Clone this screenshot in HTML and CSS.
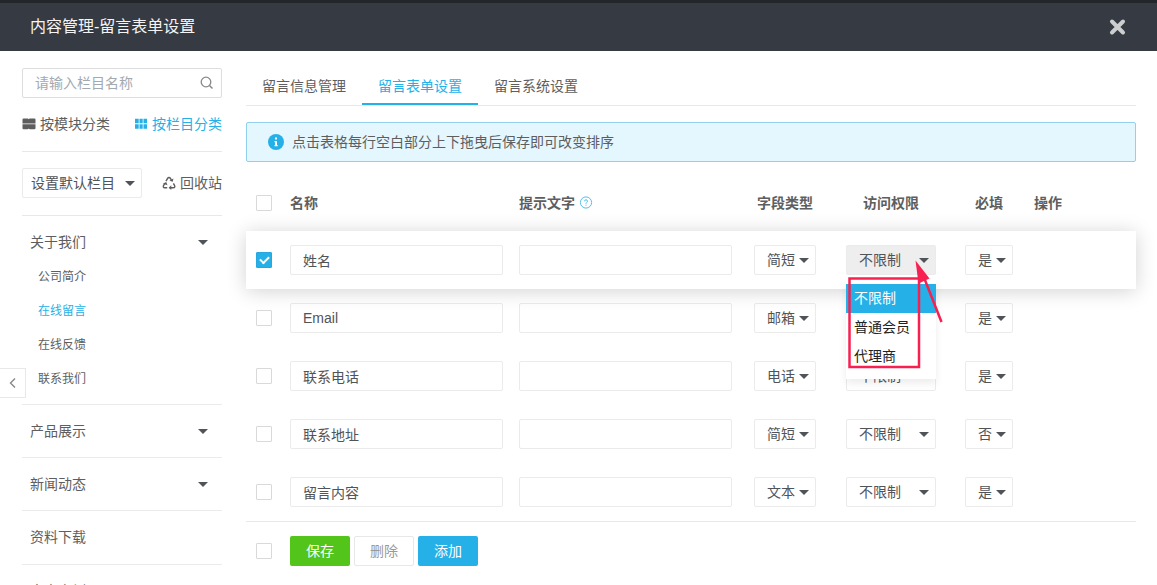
FILE: index.html
```
<!DOCTYPE html>
<html lang="zh-CN">
<head>
<meta charset="utf-8">
<title>内容管理-留言表单设置</title>
<link rel="stylesheet" href="styles.css">
</head>
<body>
<div class="app">
  <header class="topbar">
    <h1 class="topbar-title">内容管理-留言表单设置</h1>
    <button class="close" type="button" aria-label="关闭">
      <svg width="18" height="18" viewBox="0 0 18 18"><path d="M3 3.500l11 11M14 3.500l-11 11" stroke="currentColor" stroke-width="4" stroke-linecap="round" fill="none"/></svg>
    </button>
  </header>
  <div class="body">
    <aside class="sidebar">
      <div class="search">
        <input class="search-input" type="text" placeholder="请输入栏目名称" aria-label="请输入栏目名称">
        <svg class="search-icon" width="14" height="14" viewBox="0 0 14 14"><circle cx="6" cy="6" r="4.800" fill="none" stroke="currentColor" stroke-width="1.300"/><path d="M9.500 9.500l3 3" stroke="currentColor" stroke-width="1.500"/></svg>
      </div>
      <div class="side-row modes">
        <a class="side-link" href="#module"><svg width="14" height="12" viewBox="0 0 14 12"><path fill="currentColor" d="M1.500.5h4q1 0 1.200.8.300-.8 1.300-.8H12.500q1 0 1 1v4H.5v-4q0-1 1-1zM.5 6.300h13v4q0 1-1 1H8q-1 0-1.200-.8-.3.800-1.300.8h-4q-1 0-1-1z"/></svg>按模块分类</a>
        <a class="side-link is-active" href="#column"><svg width="14" height="12" viewBox="0 0 14 12"><path fill="currentColor" d="M1 .8h3.700v4.400H1zM5.500.8h3.200v4.400H5.500zM9.500.8H13v4.400H9.500zM1 6.200h3.700v4.600H1zM5.500 6.200h3.200v4.600H5.500zM9.500 6.200H13v4.600H9.500z"/></svg>按栏目分类</a>
      </div>
      <div class="side-row tools">
        <span class="select side-select"><select aria-label="默认栏目"><option>设置默认栏目</option></select></span>
        <a class="side-link" href="#recycle"><svg width="14" height="14" viewBox="0 0 14 14" fill="none" stroke="currentColor" stroke-width="1.400" stroke-linejoin="round"><path d="M4 5.200L5.600 2.300Q7 .6 8.400 2.300L9.500 4.300M2.900 7.200L1.500 9.600Q.8 11.600 2.700 11.800H5.200M7.500 11.800h3.800q2.100-.2 1.300-2.200L11.400 7.400"/><path fill="currentColor" stroke="none" d="M7.500 4.800l3.300 1 .6-3.400zM1 7.800l3.200-1.900 1.300 3.300zM9.300 9.300v4.700L6.700 11.700z"/></svg>回收站</a>
      </div>
      <nav>
        <section class="group">
          <a class="group-title" href="#about">关于我们<i class="caret"></i></a>
          <ul class="sub">
            <li><a href="#a1">公司简介</a></li>
            <li><a class="is-active" href="#a2">在线留言</a></li>
            <li><a href="#a3">在线反馈</a></li>
            <li><a href="#a4">联系我们</a></li>
          </ul>
        </section>
        <section class="group"><a class="group-title" href="#product">产品展示<i class="caret"></i></a></section>
        <section class="group"><a class="group-title" href="#news">新闻动态<i class="caret"></i></a></section>
        <section class="group"><a class="group-title" href="#files">资料下载</a></section>
        <section class="group"><a class="group-title" href="#cases">客户案例</a></section>
      </nav>
    </aside>
    <button class="collapse" type="button" aria-label="收起侧栏">
      <svg width="8" height="12" viewBox="0 0 8 12"><path d="M6 1.500L1.500 6l4.500 4.500" fill="none" stroke="currentColor" stroke-width="1.400"/></svg>
    </button>
    <main class="main">
      <nav class="tabs">
        <a class="tab" href="#t1">留言信息管理</a>
        <a class="tab is-active" href="#t2">留言表单设置</a>
        <a class="tab" href="#t3">留言系统设置</a>
      </nav>
      <p class="notice">
        <svg width="16" height="16" viewBox="0 0 16 16"><circle cx="8" cy="8" r="8" fill="#25b1e8"/><path d="M7 3.500h2v2H7zM6.500 7H9v4h.7v1.200H6.500V11h.6V8.200h-.6z" fill="#fff"/></svg>
        点击表格每行空白部分上下拖曳后保存即可改变排序
      </p>
      <table class="fields">
        <colgroup><col class="c-check"><col><col><col class="c-type"><col class="c-access"><col class="c-req"><col class="c-act"></colgroup>
        <thead>
          <tr>
            <th class="mid"><input type="checkbox" aria-label="全选"></th>
            <th>名称</th>
            <th><span class="hint">提示文字<svg width="13" height="14" viewBox="0 0 13 14" fill="none" stroke="#4fc0ee"><circle cx="6" cy="6.500" r="5.600"/><path d="M4.500 5.300Q4.600 3.800 6 3.800T7.500 5.200Q7.500 6 6.700 6.500T6 7.800M6 8.700v1"/></svg></span></th>
            <th class="mid">字段类型</th>
            <th class="mid">访问权限</th>
            <th class="mid">必填</th>
            <th>操作</th>
          </tr>
        </thead>
        <tbody>
          <tr class="picked">
            <td class="mid"><input type="checkbox" checked aria-label="选择 姓名"></td>
            <td><input class="text" type="text" value="姓名" aria-label="名称"></td>
            <td><input class="text" type="text" aria-label="提示文字"></td>
            <td class="mid"><span class="select w-type"><select aria-label="字段类型"><option>简短</option></select></span></td>
            <td class="mid"><span class="select w-access is-open"><select aria-label="访问权限"><option>不限制</option></select>
              <ul class="menu" role="listbox" aria-label="访问权限">
                <li class="is-active" role="option" aria-selected="true">不限制</li>
                <li role="option">普通会员</li>
                <li role="option">代理商</li>
              </ul>
              <svg class="marker" width="100" height="130" viewBox="0 0 100 130" fill="none" stroke="#f82050" stroke-width="2.500"><path d="M3.500 33.500h69.500v88.500H3.500zM77 30L95.500 77"/><path d="M69.500 15.500L83.500 33.500 72.500 38.500z" fill="#f82050" stroke="none"/></svg>
            </span></td>
            <td class="mid"><span class="select w-req"><select aria-label="必填"><option>是</option></select></span></td>
            <td></td>
          </tr>
          <tr>
            <td class="mid"><input type="checkbox" aria-label="选择 Email"></td>
            <td><input class="text" type="text" value="Email" aria-label="名称"></td>
            <td><input class="text" type="text" aria-label="提示文字"></td>
            <td class="mid"><span class="select w-type"><select aria-label="字段类型"><option>邮箱</option></select></span></td>
            <td class="mid"><span class="select w-access"><select aria-label="访问权限"><option>不限制</option></select></span></td>
            <td class="mid"><span class="select w-req"><select aria-label="必填"><option>是</option></select></span></td>
            <td></td>
          </tr>
          <tr>
            <td class="mid"><input type="checkbox" aria-label="选择 联系电话"></td>
            <td><input class="text" type="text" value="联系电话" aria-label="名称"></td>
            <td><input class="text" type="text" aria-label="提示文字"></td>
            <td class="mid"><span class="select w-type"><select aria-label="字段类型"><option>电话</option></select></span></td>
            <td class="mid"><span class="select w-access"><select aria-label="访问权限"><option>不限制</option></select></span></td>
            <td class="mid"><span class="select w-req"><select aria-label="必填"><option>是</option></select></span></td>
            <td></td>
          </tr>
          <tr>
            <td class="mid"><input type="checkbox" aria-label="选择 联系地址"></td>
            <td><input class="text" type="text" value="联系地址" aria-label="名称"></td>
            <td><input class="text" type="text" aria-label="提示文字"></td>
            <td class="mid"><span class="select w-type"><select aria-label="字段类型"><option>简短</option></select></span></td>
            <td class="mid"><span class="select w-access"><select aria-label="访问权限"><option>不限制</option></select></span></td>
            <td class="mid"><span class="select w-req"><select aria-label="必填"><option>否</option></select></span></td>
            <td></td>
          </tr>
          <tr>
            <td class="mid"><input type="checkbox" aria-label="选择 留言内容"></td>
            <td><input class="text" type="text" value="留言内容" aria-label="名称"></td>
            <td><input class="text" type="text" aria-label="提示文字"></td>
            <td class="mid"><span class="select w-type"><select aria-label="字段类型"><option>文本</option></select></span></td>
            <td class="mid"><span class="select w-access"><select aria-label="访问权限"><option>不限制</option></select></span></td>
            <td class="mid"><span class="select w-req"><select aria-label="必填"><option>是</option></select></span></td>
            <td></td>
          </tr>
        </tbody>
        <tfoot>
          <tr>
            <td class="mid"><input type="checkbox" aria-label="全选"></td>
            <td colspan="6"><div class="actions">
              <button class="btn btn-save" type="button">保存</button>
              <button class="btn btn-delete" type="button">删除</button>
              <button class="btn btn-add" type="button">添加</button>
            </div></td>
          </tr>
        </tfoot>
      </table>
    </main>
  </div>
</div>
</body>
</html>
```
FILE: styles.css
```
* { box-sizing: border-box; }
body {
  margin: 0;
  background: #fff;
  color: #5e5e5e;
  font: 14px/20px "Liberation Sans", "Noto Sans CJK SC", sans-serif;
}
a { color: inherit; text-decoration: none; }
ul { margin: 0; padding: 0; list-style: none; }
input, select, button { font: inherit; color: inherit; }
svg { display: block; flex: none; }

.app { display: flex; flex-direction: column; height: 100vh; overflow: hidden; }

.topbar {
  flex: none;
  display: flex;
  align-items: center;
  justify-content: space-between;
  height: 51px;
  padding: 0 30px;
  border-top: 3px solid #23272c;
  background: #363a42;
  color: #f4f4f4;
}
.topbar-title { margin: 0; font-size: 16px; line-height: 24px; font-weight: 400; }
.close { padding: 0; border: 0; background: none; color: #ccced0; }

.body { position: relative; flex: 1; min-height: 0; display: flex; gap: 24px; padding: 17px 21px 0 22px; }

.sidebar { flex: none; width: 200px; }
.search { position: relative; }
.search-input {
  display: block;
  width: 100%;
  height: 30px;
  padding: 0 32px 0 12px;
  border: 1px solid #ddd;
  border-radius: 2px;
  background: #fff;
}
.search-input::placeholder { color: #a3a9b0; opacity: 1; }
.search-icon { position: absolute; right: 8px; top: 8px; color: #888; }
.side-row { display: flex; align-items: center; justify-content: space-between; border-bottom: 1px solid #e8e8e8; }
.modes { height: 54px; padding-bottom: 2px; }
.tools { height: 64px; padding-bottom: 2px; }
.side-link { display: flex; align-items: center; gap: 4px; }
.is-active { color: #25b1e8; }

.select { position: relative; display: inline-block; text-align: left; vertical-align: middle; }
.select select {
  display: block;
  width: 100%;
  height: 30px;
  padding: 0 12px;
  border: 1px solid #ebebeb;
  border-radius: 2px;
  background: #fff;
  color: #505458;
  appearance: none;
}
.select::after, .caret {
  width: 0;
  height: 0;
  border: 5px solid transparent;
  border-top-color: #505458;
  border-bottom: 0;
}
.select::after { content: ""; position: absolute; right: 7px; top: 13px; pointer-events: none; }
.side-select { width: 120px; }
.side-select select { padding: 0 8px; }
.w-type { width: 62px; }
.w-access { width: 90px; }
.w-req { width: 48px; }
.is-open select { background: #eee; }

.group { border-bottom: 1px solid #ebebeb; }
.group-title { display: flex; align-items: center; justify-content: space-between; height: 52px; padding: 0 14px 0 8px; }
.group:nth-child(4) { padding-bottom: 1px; }
.sub { margin-top: -8px; padding: 0 0 8px 16px; font-size: 12px; line-height: 34px; }
.sub a { display: block; }

.collapse {
  position: absolute;
  left: 0;
  top: 317px;
  display: flex;
  align-items: center;
  justify-content: center;
  width: 26px;
  height: 30px;
  padding: 0;
  border: 1px solid #e8e8e8;
  border-left: 0;
  background: #fff;
  color: #888;
}

.main { flex: 1; min-width: 0; }
.tabs { display: flex; height: 38px; border-bottom: 1px solid #e8e8e8; }
.tab { height: 37px; padding: 8px 16px 0; }
.tab.is-active { border-bottom: 2px solid #25b1e8; }
.notice {
  display: flex;
  align-items: center;
  gap: 8px;
  height: 40px;
  margin: 16px 0 13px;
  padding: 0 21px;
  border: 1px solid #91d0ee;
  border-radius: 2px;
  background: #e4f6fe;
}

.fields { width: 100%; table-layout: fixed; border-collapse: separate; border-spacing: 0; }
.c-check { width: 36px; }
.c-type { width: 90px; }
.c-access { width: 122px; }
.c-req { width: 74px; }
.c-act { width: 110px; }
.fields th, .fields td { height: 58px; padding: 0 8px; text-align: left; vertical-align: middle; }
.fields th { height: 56px; font-weight: 700; }
.fields .mid { padding: 0; text-align: center; }
.fields tfoot td { height: 59px; border-top: 1px solid #e8e8e8; }
.picked { position: relative; z-index: 1; background: #fff; box-shadow: 0 2px 20px rgba(0, 0, 0, .18); }
.hint { display: flex; align-items: center; gap: 5px; }
.text {
  display: block;
  width: 100%;
  height: 30px;
  padding: 0 12px;
  border: 1px solid #ebebeb;
  border-radius: 2px;
  background: #fff;
  color: #505458;
}
input[type="checkbox"] {
  display: grid;
  place-items: center;
  width: 16px;
  height: 16px;
  margin: 0 auto;
  border: 1px solid #d9d9d9;
  border-radius: 1px;
  background: #fff;
  appearance: none;
}
input[type="checkbox"]:checked { border-color: #25a8e0; background: #25b1e8; }
input[type="checkbox"]:checked::before {
  content: "";
  width: 7px;
  height: 4px;
  margin-bottom: 2px;
  border: solid #fff;
  border-width: 0 0 2px 2px;
  transform: rotate(-45deg);
}

.menu {
  position: absolute;
  left: 0;
  top: 34px;
  width: 100%;
  padding: 5px 0 8px;
  background: #fff;
  color: #222;
  line-height: 29px;
  box-shadow: 0 4px 8px rgba(0, 0, 0, .08);
}
.menu li { padding: 0 8px; }
.menu .is-active { background: #25b1e8; color: #fff; }
.marker { position: absolute; left: 0; top: 0; z-index: 2; pointer-events: none; }

.actions { display: flex; gap: 4px; }
.btn { width: 60px; height: 30px; padding: 0; border: 0; border-radius: 2px; color: #fff; }
.btn-save { background: #52c41a; }
.btn-delete { border: 1px solid #e8e8e8; background: #fff; color: #999; }
.btn-add { background: #25b1e8; }
```
